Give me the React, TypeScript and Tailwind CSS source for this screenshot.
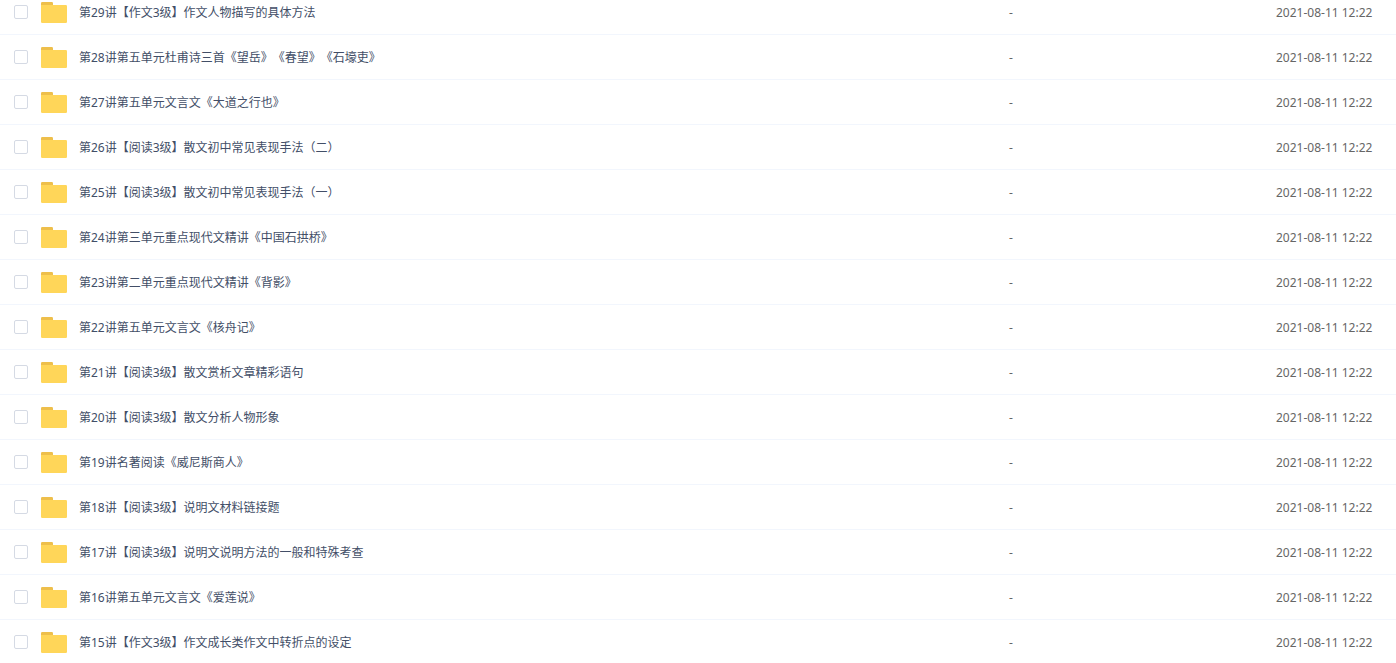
import React from "react";

interface FileItem {
  id: number;
  name: string;
  size: string;
  modified: string;
}

const names: string[] = [
  "第29讲【作文3级】作文人物描写的具体方法",
  "第28讲第五单元杜甫诗三首《望岳》《春望》《石壕吏》",
  "第27讲第五单元文言文《大道之行也》",
  "第26讲【阅读3级】散文初中常见表现手法（二）",
  "第25讲【阅读3级】散文初中常见表现手法（一）",
  "第24讲第三单元重点现代文精讲《中国石拱桥》",
  "第23讲第二单元重点现代文精讲《背影》",
  "第22讲第五单元文言文《核舟记》",
  "第21讲【阅读3级】散文赏析文章精彩语句",
  "第20讲【阅读3级】散文分析人物形象",
  "第19讲名著阅读《威尼斯商人》",
  "第18讲【阅读3级】说明文材料链接题",
  "第17讲【阅读3级】说明文说明方法的一般和特殊考查",
  "第16讲第五单元文言文《爱莲说》",
  "第15讲【作文3级】作文成长类作文中转折点的设定",
];

const files: FileItem[] = names.map((name, index) => ({
  id: index,
  name,
  size: "-",
  modified: "2021-08-11 12:22",
}));

const FolderIcon: React.FC = () => (
  <svg width="26" height="22" viewBox="0 0 26 22" className="shrink-0" aria-hidden="true">
    <path d="M0 7V2.2Q0 1 1.2 1H10.8Q12 1 12 2.2V7Z" fill="#eebf4b" />
    <path d="M0 4H24.8Q26 4 26 5.2V20.8Q26 22 24.8 22H1.2Q0 22 0 20.8Z" fill="#ffd659" />
  </svg>
);

const FileRow: React.FC<{ file: FileItem }> = ({ file }) => (
  <tr className="h-[45px]">
    <td className="border-b border-[#f2f6fd] p-0">
      <div className="flex items-center pl-3.5">
        <input
          type="checkbox"
          id={`file-${file.id}`}
          className="
            size-3.5 shrink-0 appearance-none
            rounded-xs border border-[#d5dae4] bg-white
            checked:border-[#09aaff] checked:bg-[#09aaff]
          "
        />
        <label
          htmlFor={`file-${file.id}`}
          className="ml-[13px] flex min-w-0 items-center gap-3 text-[#424e67]"
        >
          <FolderIcon />
          <span className="truncate pt-0.5">{file.name}</span>
        </label>
      </div>
    </td>
    <td className="border-b border-[#f2f6fd] p-0 pt-0.5">{file.size}</td>
    <td className="border-b border-[#f2f6fd] p-0 pt-0.5 whitespace-nowrap">{file.modified}</td>
  </tr>
);

const App: React.FC = () => {
  return (
    <main className="h-screen overflow-hidden bg-white">
      {/* List is scrolled slightly past its first row */}
      <table
        className="
          -mt-2.5 w-full table-fixed border-separate border-spacing-0
          text-left font-['Noto_Sans','Noto_Sans_CJK_SC',sans-serif]
          text-xs text-[#666] [text-spacing-trim:space-all]
        "
      >
        <colgroup>
          <col />
          <col className="w-[267px]" />
          <col className="w-[120px]" />
        </colgroup>
        <tbody>
          {files.map((file) => (
            <FileRow key={file.id} file={file} />
          ))}
        </tbody>
      </table>
    </main>
  );
};

export default App;
